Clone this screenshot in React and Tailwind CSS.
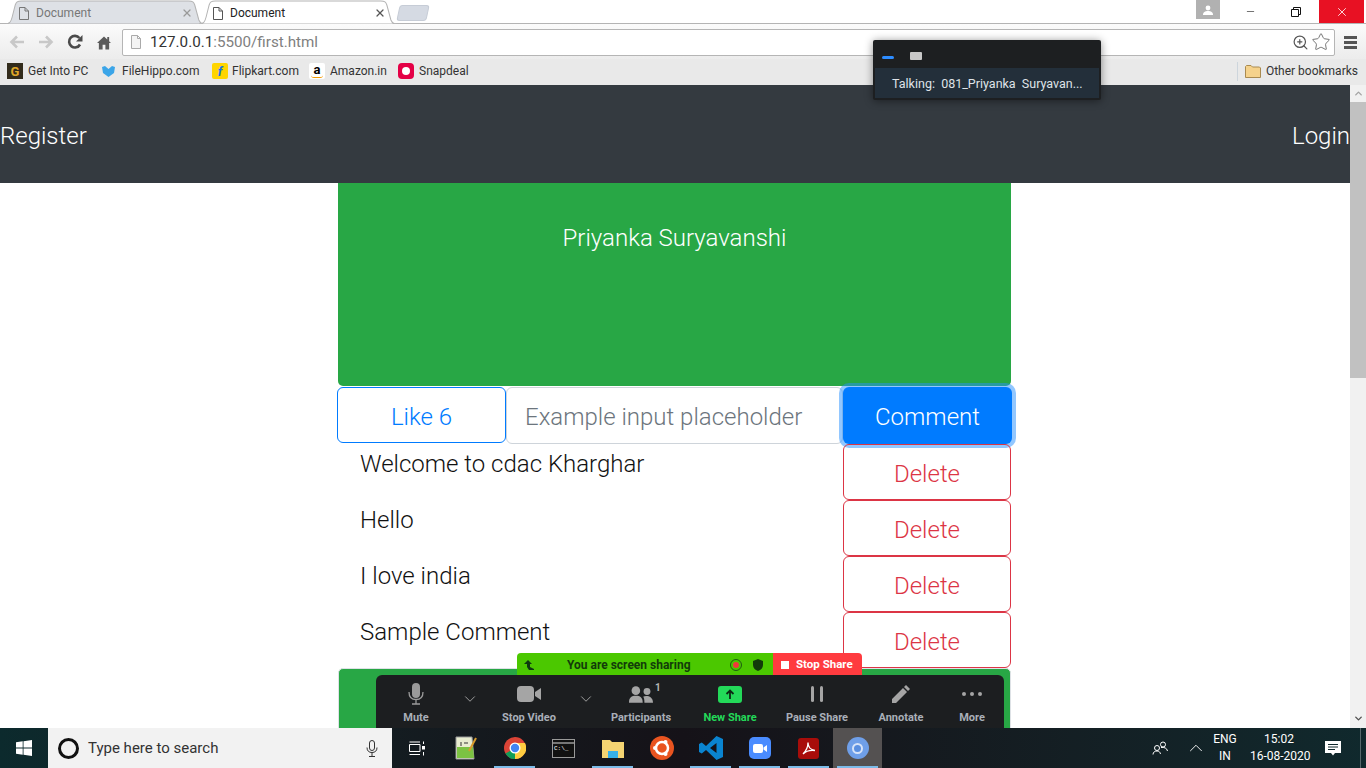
import { ChevronDown, ChevronUp, Minus, Star, X, ZoomIn } from 'lucide-react';

const font = "font-['Roboto','Noto_Sans',sans-serif]";

function Tab({ active, width, closeGap }) {
  return (
    <div className={`relative flex h-6 items-center ${width} ${closeGap} pl-[14px] pt-[2px]`}>
      <svg className="absolute inset-0 h-6 w-full" viewBox="0 0 195 24" preserveAspectRatio="none">
        <path d="M0 24 C5 24 6 21 7 17 L10 5 C11 2 12 1 16 1 L179 1 C183 1 184 2 185 5 L189 20 C190 23 192 24 195 24 Z" fill={active ? '#ffffff' : '#dee1e6'} stroke="#b4b4b4" />
      </svg>
      <svg className="relative h-[13px] w-[10px] shrink-0" viewBox="0 0 10 13" fill="none" stroke={active ? '#555' : '#777'}>
        <path d="M.5 .5H6L9.500 4V12.500H.5Z M6 .5V4H9.500" />
      </svg>
      <span className={`relative ml-[7px] mr-auto text-xs ${active ? 'text-[#222]' : 'text-[#777]'}`}>Document</span>
      <X className={`relative ${active ? 'text-[#555]' : 'text-[#999]'}`} size={12} strokeWidth={2.5} />
    </div>
  );
}

function Bookmark({ icon, label, width }) {
  return (
    <div className={`flex items-center gap-[4px] text-xs text-[#333] ${width}`}>
      {icon}
      <span>{label}</span>
    </div>
  );
}

function BrowserChrome() {
  return (
    <div className="relative shrink-0 bg-white">
      <div className="relative flex h-6 items-start border-b border-[#b4b4b4] pl-[5px]">
        <Tab width="w-[200px]" closeGap="pr-[12px]" />
        <div className="-ml-[6px]"><Tab active width="w-[198px]" closeGap="pr-[11px]" /></div>
        <div className="ml-[1px] mt-[5px] h-[16px] w-[30px] -skew-x-12 rounded-[3px] border border-[#c6ccd6] bg-[#d5dae3]" />
        <div className="ml-auto flex h-[23px] items-start">
          <div className="mr-[7px] flex h-[19px] w-6 items-center justify-center bg-[#b1b1b1]">
            <svg width="10" height="10" viewBox="0 0 10 10" fill="#fff"><circle cx="5" cy="3" r="2.4" /><path d="M0 10C0 7 2 6 5 6S10 7 10 10Z" /></svg>
          </div>
          <div className="flex h-[23px] w-[46px] items-center justify-center"><Minus size={11} strokeWidth={1.2} className="text-black" /></div>
          <div className="flex h-[23px] w-[46px] items-center justify-center">
            <svg width="10" height="10" viewBox="0 0 10 10" fill="none" stroke="#111"><path d="M.5 2.500h7v7h-7z M2.500 2.500v-2h7v7h-2" /></svg>
          </div>
          <div className="flex h-[23px] w-[45px] items-center justify-center bg-[#e81123]"><X size={14} strokeWidth={1.4} className="text-white" /></div>
          <div className="w-[2px]" />
        </div>
      </div>

      <div className="flex h-[35px] items-center bg-gradient-to-b from-[#fbfbfb] to-[#ececec] pl-[9px] pr-[9px] pt-[1px]">
        <svg width="16" height="14" viewBox="0 0 16 14" fill="none" stroke="#c8c8c8" strokeWidth="2.6"><path d="M15 7H2.500M8 1.500 2.500 7 8 12.500" /></svg>
        <svg className="ml-[13px]" width="16" height="14" viewBox="0 0 16 14" fill="none" stroke="#c8c8c8" strokeWidth="2.6"><path d="M1 7H13.500M8 1.500 13.500 7 8 12.500" /></svg>
        <svg className="ml-[13px]" width="16" height="16" viewBox="0 0 16 16" fill="none"><path d="M13 10.500A5.800 5.800 0 1 1 12.400 4" stroke="#4a4a4a" strokeWidth="2.6" /><path d="M15.500 1V7.500H9Z" fill="#4a4a4a" /></svg>
        <svg className="ml-[14px]" width="14" height="15" viewBox="0 0 15 15" fill="#5a5a5a"><path d="M7.500 1 11 4.300V1.500H13V6.200L15 8H13V15H9V10H6V15H2V8H0Z" /></svg>
        <div className="ml-[11px] flex h-[27px] flex-1 items-center rounded-[2px] border border-[#b5b5b5] bg-white pl-[7px] pr-[3px]">
          <svg width="12" height="14" viewBox="0 0 12 14" fill="#f4f4f4" stroke="#aaa"><path d="M1.500 .5H7.500L10.500 3.500V13.500H1.500Z M7.500 .5V3.500H10.500" /></svg>
          <span className="ml-[8px] pt-[1px] text-[15.2px] text-[#333]">127.0.0.1<span className="text-[#808080]">:5500/first.html</span></span>
          <ZoomIn size={17} strokeWidth={1.7} className="ml-auto text-[#555]" />
          <Star size={20} strokeWidth={1.2} className="ml-[2px] text-[#777]" />
        </div>
        <div className="ml-[9px] flex w-[13px] flex-col gap-[2px]">
          <div className="h-[3px] bg-[#555]" /><div className="h-[3px] bg-[#555]" /><div className="h-[3px] bg-[#555]" />
        </div>
      </div>

      <div className="flex h-[26px] items-center bg-[#e9e9e9] pb-[2px] pl-[7px] pr-[8px]">
        <Bookmark width="w-[95px]" label="Get Into PC" icon={<div className="mr-[1px] flex h-4 w-4 items-center justify-center bg-[#332c1c] text-[13px] font-bold leading-none text-[#e0a828]">G</div>} />
        <Bookmark width="w-[110px]" label="FileHippo.com" icon={<svg className="mr-[3px]" width="13" height="11" viewBox="0 0 13 11" fill="#3ba5e8"><path d="M0 1 3 0 6.500 3 10 0 13 1 12 7 6.500 11 1 7Z" /></svg>} />
        <Bookmark width="w-[97px]" label="Flipkart.com" icon={<div className="flex h-4 w-4 items-center justify-center rounded-[2px] bg-[#ffd500] text-[13px] font-bold italic leading-none text-[#1b74e4]">f</div>} />
        <Bookmark width="w-[89px]" label="Amazon.in" icon={<div className="relative mr-[1px] flex h-4 w-4 justify-center rounded-[2px] bg-white text-[13px] font-bold leading-[13px] text-black">a<div className="absolute bottom-[1px] left-[2px] h-[3px] w-3 rounded-b-full border-b border-[#f59b00]" /></div>} />
        <Bookmark label="Snapdeal" icon={<div className="mr-[1px] flex h-4 w-4 items-center justify-center rounded-[4px] bg-[#e40046]"><div className="h-2 w-2 rounded-full bg-white" /></div>} />
        <div className="ml-auto h-[19px] border-l border-[#cdd5dc]" />
        <div className="ml-[7px] flex items-center gap-[5px] text-xs text-[#333]">
          <svg width="16" height="13" viewBox="0 0 16 13"><path d="M.5 12.500V1.500L1.500 .5H6L7.500 2H14.500L15.500 3V12.500Z" fill="#f5d28c" stroke="#a98a50" /></svg>
          <span>Other bookmarks</span>
        </div>
      </div>
    </div>
  );
}

function CommentRow({ text }) {
  return (
    <div className="flex h-14">
      <p className="flex-1 pl-[22px] pt-[2px] text-2xl font-light leading-[36px] text-[#111]">{text}</p>
      <button className="mr-[1px] h-14 w-[168px] rounded-[6px] border border-[#dc3545] pt-[3px] text-2xl font-light text-[#dc3545]">Delete</button>
    </div>
  );
}

function Page() {
  return (
    <div className="flex min-h-0 flex-1">
      <div className="min-w-0 flex-1 overflow-hidden bg-white">
        <div className="flex h-[98px] items-center justify-between bg-[#343a40] pt-[4px] text-2xl font-light text-white">
          <a>Register</a>
          <a>Login</a>
        </div>
        <div className="mx-auto w-[674px]">
          <div className="mr-px h-[203px] rounded-b-[5px] bg-[#28a745] pt-[36px] text-center text-2xl font-light leading-[38px] text-white">Priyanka Suryavanshi</div>
          <div className="mt-px flex h-[57px] items-start text-2xl font-light">
            <button className="-ml-px h-14 w-[169px] shrink-0 rounded-[6px] border border-[#007bff] pt-[4px] text-[#007bff]">Like 6</button>
            <div className="flex h-[57px] w-[337px] items-center rounded-[6px] border border-[#ced4da] pl-[18px] pt-[3px] text-[#6c757d]">Example input placeholder</div>
            <button className="h-[57px] w-[169px] rounded-[6px] bg-[#007bff] pt-[3px] text-white shadow-[0_0_0_4px_rgba(38,143,255,0.5)]">Comment</button>
          </div>
          <CommentRow text="Welcome to cdac Kharghar" />
          <CommentRow text="Hello" />
          <CommentRow text="I love india" />
          <CommentRow text="Sample Comment" />
          <div className="mr-px h-20 rounded-[5px] border border-[#dee2e6] bg-[#28a745]" />
        </div>
      </div>
      <div className="flex w-4 shrink-0 flex-col items-center bg-[#f1f1f1]">
        <ChevronUp size={11} strokeWidth={3} className="mt-[3px] text-[#a3a3a3]" />
        <div className="mt-[3px] h-[276px] w-full bg-[#c1c1c1]" />
        <div className="mb-[4px] mt-auto"><ChevronDown size={11} strokeWidth={3} className="text-[#505050]" /></div>
      </div>
    </div>
  );
}

function ZoomButton({ icon, label, green, width }) {
  return (
    <div className={`flex flex-col items-center ${width}`}>
      <div className="flex h-[26px] items-center justify-center">{icon}</div>
      <span className={`mt-[4px] whitespace-nowrap text-[11px] font-bold leading-[14px] ${green ? 'text-[#23d959]' : 'text-[#a9afb8]'}`}>{label}</span>
    </div>
  );
}

function ZoomChevron({ width }) {
  return (
    <div className={`flex h-[26px] items-center justify-center pt-[9px] ${width}`}>
      <ChevronDown size={18} strokeWidth={1.2} className="text-[#aaa]" />
    </div>
  );
}

function ZoomBar() {
  return (
    <div className="absolute left-[376px] top-[653px] w-[628px]">
      <div className="ml-[141px] flex h-[22px] w-[345px]">
        <div className="flex w-[256px] items-center rounded-tl-[4px] bg-[#4bc800] pl-[7px] pt-px">
          <svg width="10" height="10" viewBox="0 0 10 10" fill="#0e3a10"><path d="M4 0 8 4H6V7L10 9V10H5L3 7V4H0Z" /></svg>
          <span className="ml-[33px] w-[126px] whitespace-nowrap text-xs font-bold text-[#123b0a]">You are screen sharing</span>
          <div className="ml-[37px] flex h-[12px] w-[12px] items-center justify-center rounded-full border border-[#1d5c12]"><div className="h-[6px] w-[6px] rounded-full bg-[#f03a3a]" /></div>
          <svg className="ml-[11px]" width="10" height="12" viewBox="0 0 10 12" fill="#123b0a"><path d="M5 0 10 2V6C10 9 8 11 5 12 2 11 0 9 0 6V2Z" /></svg>
        </div>
        <div className="flex flex-1 items-center rounded-tr-[4px] bg-[#ff3b3f] pl-[8px] pt-px">
          <div className="h-[8px] w-[8px] bg-white" />
          <span className="ml-[7px] text-[11.5px] font-bold text-white">Stop Share</span>
        </div>
      </div>
      <div className="relative h-[53px] rounded-t-[6px] bg-[#1c1e20] pt-[6px]">
        <div className="flex">
          <ZoomButton width="ml-[24px] w-[32px]" label="Mute" icon={<svg width="16" height="22" viewBox="0 0 16 22" fill="none"><rect x="4" y="0" width="8" height="15" rx="4" fill="#9a9a9a" /><path d="M1 9C1 14 4 16.500 8 16.500S15 14 15 9M8 16.500V21M4 21H12" stroke="#9a9a9a" strokeWidth="1.300" /></svg>} />
          <ZoomChevron width="ml-[20px] w-[36px]" />
          <ZoomButton width="ml-[3px] w-[76px]" label="Stop Video" icon={<svg width="24" height="16" viewBox="0 0 24 16" fill="#a5a5a5"><rect width="17" height="16" rx="4" /><path d="M18 6 24 2V14L18 10Z" /></svg>} />
          <ZoomChevron width="ml-px w-[36px]" />
          <ZoomButton width="-ml-[5px] w-[84px]" label="Participants" icon={<svg width="24" height="17" viewBox="0 0 28 19" fill="#a5a5a5"><circle cx="8" cy="5" r="5" /><circle cx="21" cy="6" r="4" /><path d="M0 19C0 13 3 11 8 11S16 13 16 19Z M18 19C18 15 17.500 13 16.500 12C20 10 28 11 28 19Z" /></svg>} />
          <ZoomButton width="ml-[7px] w-[80px]" green label="New Share" icon={<div className="flex h-[17px] w-6 items-center justify-center rounded-[3px] bg-[#23d959]"><svg width="10" height="10" viewBox="0 0 10 10" fill="none" stroke="#0c2a14" strokeWidth="1.800"><path d="M5 10V2M1.500 5 5 1.500 8.500 5" /></svg></div>} />
          <ZoomButton width="ml-[7px] w-[80px]" label="Pause Share" icon={<div className="flex gap-[6px]"><div className="h-[16px] w-[3px] rounded-sm bg-[#a5a5a5]" /><div className="h-[16px] w-[3px] rounded-sm bg-[#a5a5a5]" /></div>} />
          <ZoomButton width="ml-[9px] w-[70px]" label="Annotate" icon={<svg width="18" height="18" viewBox="0 0 18 18" fill="#a5a5a5"><path d="M0 18V14L11 3 15 7 4 18Z M12 2 14 0 18 4 16 6Z" /></svg>} />
          <ZoomButton width="ml-[16px] w-[40px]" label="More" icon={<div className="flex gap-[4px]"><div className="h-[4px] w-[4px] rounded-full bg-[#a5a5a5]" /><div className="h-[4px] w-[4px] rounded-full bg-[#a5a5a5]" /><div className="h-[4px] w-[4px] rounded-full bg-[#a5a5a5]" /></div>} />
        </div>
        <span className="absolute left-[279px] top-[5px] text-[10px] font-bold text-[#b5b5b5]">1</span>
      </div>
    </div>
  );
}

function TalkingWindow() {
  return (
    <div className="absolute left-[873px] top-[40px] w-[228px] rounded-[2px] bg-[#1d1f21] px-[2px] pb-[2px] shadow-[0_1px_8px_rgba(0,0,0,0.45)]">
      <div className="flex h-[28px] items-center pl-[7px] pt-[3px]">
        <div className="mt-[4px] h-[3px] w-3 rounded-sm bg-[#2d8cff]" />
        <div className="ml-[16px] h-[8px] w-3 rounded-[1px] bg-[#c8c8c8]" />
      </div>
      <div className="flex h-[30px] items-center whitespace-pre bg-[#232f3a] pl-[17px] pt-[2px] text-[12.5px] text-[#dfe3e8]">Talking:  081_Priyanka  Suryavan...</div>
    </div>
  );
}

function TaskIcon({ children, running, active }) {
  return (
    <div className={`relative flex h-10 w-[49px] items-center justify-center ${active ? 'bg-[#545151]' : ''}`}>
      {children}
      {running && <div className="absolute bottom-0 left-[4px] right-[4px] h-[2px] bg-[#7cbbe8]" />}
    </div>
  );
}

function Taskbar() {
  return (
    <div className="flex h-10 shrink-0 bg-gradient-to-r from-[#0c2a2d] via-[#151218] to-[#10292d] text-white">
      <div className="flex w-12 items-center justify-center">
        <svg width="16" height="16" viewBox="0 0 16 16" fill="#fff"><path d="M0 2.300 6.700 1.300V7.600H0Z M7.500 1.200 16 0V7.600H7.500Z M0 8.400H6.700V14.700L0 13.700Z M7.500 8.400H16V16L7.500 14.800Z" /></svg>
      </div>
      <div className="flex w-[344px] items-center bg-[#f2f2f2] pl-[10px] pr-[14px]">
        <div className="h-[21px] w-[21px] rounded-full border-[3px] border-[#111]" />
        <span className="ml-[9px] text-[15px] text-[#333]">Type here to search</span>
        <svg className="ml-auto" width="12" height="17" viewBox="0 0 12 17" fill="none" stroke="#333"><rect x="3.500" y=".5" width="5" height="10" rx="2.500" /><path d="M1 7.500C1 11 3 12.500 6 12.500S11 11 11 7.500M6 12.500V16M3 16.500H9" /></svg>
      </div>
      <div className="flex w-[49px] items-center justify-center">
        <svg width="16" height="15" viewBox="0 0 16 15" fill="none" stroke="#fff"><path d="M.5 3.500H11V10.500H.5Z M.5 1H11 M.5 13.500H11 M14.500 .5V3 M14.500 11V14.500" /><rect x="13" y="5" width="3" height="3.500" fill="#fff" stroke="none" /></svg>
      </div>
      <TaskIcon>
        <svg width="22" height="24" viewBox="0 0 22 24"><path d="M1 1H17L19 23H1Z" fill="#e8ecd0" stroke="#999" /><path d="M2 11H18L19 22H2Z" fill="#7cc242" /><path d="M6 6V10M9 7H13" stroke="#333" /><path d="M14 15 21 2" stroke="#d89b2b" strokeWidth="2" /></svg>
      </TaskIcon>
      <TaskIcon running>
        <svg width="22" height="22" viewBox="0 0 22 22"><circle cx="11" cy="11" r="11" fill="#db4437" /><path d="M11 11 1.500 16.500A11 11 0 0 0 13 21.800Z" fill="#0f9d58" /><path d="M11 6H21A11 11 0 0 1 11 22Z" fill="#ffcd40" /><circle cx="11" cy="11" r="5.500" fill="#fff" /><circle cx="11" cy="11" r="4.200" fill="#4285f4" /></svg>
      </TaskIcon>
      <TaskIcon>
        <div className="h-[19px] w-[23px] border border-[#999] bg-[#111] pt-[2px]">
          <div className="border-t-2 border-[#777]" />
          <div className="mt-[1px] pl-[1px] font-['Liberation_Mono',monospace] text-[6px] leading-[7px] text-white">C:\_</div>
        </div>
      </TaskIcon>
      <TaskIcon running>
        <svg width="22" height="20" viewBox="0 0 22 20"><path d="M0 2H8L10 4H22V20H0Z" fill="#f5d472" /><path d="M7 14H15V20H13V16H9V20H7Z" fill="#2a9fd8" /><rect x="6" y="13" width="10" height="7" fill="#37b0e8" /></svg>
      </TaskIcon>
      <TaskIcon>
        <svg width="24" height="24" viewBox="0 0 24 24"><circle cx="12" cy="12" r="12" fill="#e95420" /><circle cx="12" cy="12" r="6" fill="none" stroke="#fff" strokeWidth="2.500" /><circle cx="5" cy="12" r="2" fill="#fff" /><circle cx="15.500" cy="6" r="2" fill="#fff" /><circle cx="15.500" cy="18" r="2" fill="#fff" /></svg>
      </TaskIcon>
      <TaskIcon running>
        <svg width="24" height="24" viewBox="0 0 24 24"><path d="M17.500 0 24 3V21L17.500 24 7 14 2.800 17.500 0 16V8L2.800 6.500 7 10Z M17.500 7 11 12 17.500 17Z" fill="#0a84d0" fillRule="evenodd" /></svg>
      </TaskIcon>
      <TaskIcon running>
        <div className="flex h-[22px] w-[22px] items-center justify-center rounded-[5px] bg-[#4a8cff]">
          <svg width="14" height="9" viewBox="0 0 14 9" fill="#fff"><rect width="10" height="9" rx="2" /><path d="M10.500 3.500 14 1V8L10.500 5.500Z" /></svg>
        </div>
      </TaskIcon>
      <TaskIcon running>
        <div className="flex h-[21px] w-[21px] items-center justify-center rounded-[3px] bg-[#a80d0a]">
          <svg width="14" height="14" viewBox="0 0 14 14" fill="none" stroke="#fff" strokeWidth="1.300"><path d="M1 13C4 10 6 5 6 1.500 6 6 9 9 13 9.500 9 9 4 10 1 13Z" /></svg>
        </div>
      </TaskIcon>
      <TaskIcon running active>
        <div className="flex h-[22px] w-[22px] items-center justify-center rounded-full bg-[#6f9fe8]">
          <div className="h-[11px] w-[11px] rounded-full border-2 border-[#d7e3f7] bg-[#5a8fe0]" />
        </div>
      </TaskIcon>
      <div className="ml-auto flex items-center">
        <svg width="17" height="14" viewBox="0 0 17 14" fill="none" stroke="#fff"><circle cx="11" cy="3.500" r="2.500" /><circle cx="5" cy="7" r="2.500" /><path d="M1 13.500C1 11 3 10 5 10S8 11 8.500 13M9 6.500C12 6 15 7 15.500 10" /></svg>
        <ChevronUp size={22} strokeWidth={1} className="ml-[16px]" />
        <div className="ml-[6px] w-[24px] text-center text-xs leading-[17px]"><div>ENG</div><div>IN</div></div>
        <div className="ml-[13px] w-[58px] text-center text-xs leading-[17px]"><div>15:02</div><div className="whitespace-nowrap">16-08-2020</div></div>
        <svg className="ml-[17px]" width="16" height="16" viewBox="0 0 16 16" fill="#fff"><path d="M0 1H16V13H10L8 15.500 6 13H0Z" /><path d="M3 4.500H13M3 7H13M3 9.500H10" stroke="#10292d" /></svg>
        <div className="ml-[19px] w-[6px] self-stretch border-l border-[#55686b]" />
      </div>
    </div>
  );
}

export default function App() {
  return (
    <div className={`relative flex h-screen flex-col overflow-hidden ${font}`}>
      <BrowserChrome />
      <Page />
      <Taskbar />
      <TalkingWindow />
      <ZoomBar />
    </div>
  );
}
